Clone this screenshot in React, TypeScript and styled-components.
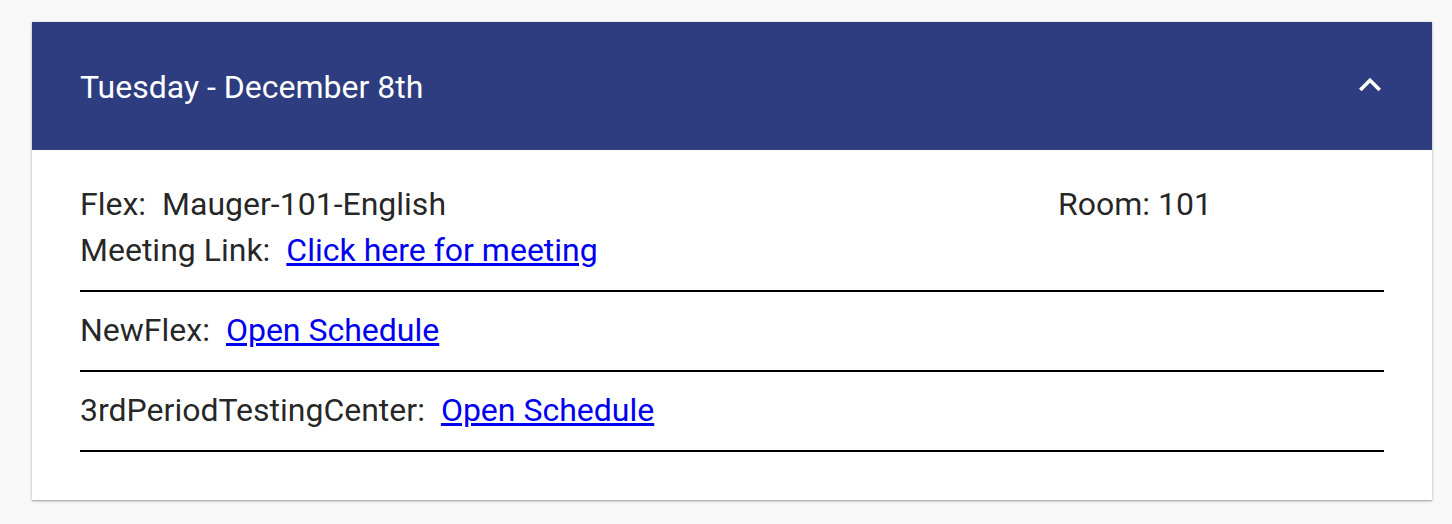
import React from 'react';
import styled, { createGlobalStyle } from 'styled-components';

const GlobalStyle = createGlobalStyle`
  body {
    margin: 0;
    background-color: #f8f8f8;
    font-family: Roboto, "Noto Sans", sans-serif;
  }
`;

const Page = styled.main`
  padding: 22px 20px 24px 32px;
`;

const Card = styled.section`
  width: 1400px;
  background-color: #fff;
  box-shadow: 0 1px 3px rgba(0, 0, 0, 0.25), 0 1px 1px rgba(0, 0, 0, 0.14);
`;

const Header = styled.header`
  display: flex;
  align-items: center;
  justify-content: space-between;
  height: 128px;
  padding: 0 40px 0 48px;
  background-color: #2e3c80;
  color: #fff;
`;

const Title = styled.h2`
  margin: 2px 0 0;
  font-size: 32px;
  font-weight: 400;
`;

const Toggle = styled.button`
  display: flex;
  padding: 0;
  margin-bottom: 2px;
  border: none;
  background: none;
  color: #fff;
  cursor: pointer;
`;

const Body = styled.div`
  padding: 36px 48px 48px;
  color: rgba(0, 0, 0, 0.87);
  font-size: 32px;
`;

const Section = styled.div<{ first?: boolean }>`
  padding: ${(p) => (p.first ? '0 0 21px' : '20px 0 21px')};
  border-bottom: 2px solid #000;
`;

const InfoGrid = styled.div`
  display: grid;
  grid-template-columns: 75% 25%;
  row-gap: 9px;
`;

const Line = styled.div`
  line-height: 37px;
`;

const Label = styled.span`
  margin-right: 16px;
`;

const Link = styled.a`
  color: #0000ee;
  text-decoration: underline;
`;

const schedules = ['NewFlex', '3rdPeriodTestingCenter'];

export default function App() {
  return (
    <>
      <GlobalStyle />
      <Page>
        <Card>
          <Header>
            <Title>Tuesday - December 8th</Title>
            <Toggle aria-label="collapse">
              <svg width="44" height="44" viewBox="0 0 24 24" fill="currentColor">
                <path d="M7.41 15.41 12 10.83l4.59 4.58L18 14l-6-6-6 6z" />
              </svg>
            </Toggle>
          </Header>
          <Body>
            <Section first>
              <InfoGrid>
                <Line>
                  <Label>Flex:</Label>Mauger-101-English
                </Line>
                <Line>Room: 101</Line>
                <Line>
                  <Label>Meeting Link:</Label>
                  <Link href="#">Click here for meeting</Link>
                </Line>
              </InfoGrid>
            </Section>
            {schedules.map((name) => (
              <Section key={name}>
                <Line>
                  <Label>{name}:</Label>
                  <Link href="#">Open Schedule</Link>
                </Line>
              </Section>
            ))}
          </Body>
        </Card>
      </Page>
    </>
  );
}
